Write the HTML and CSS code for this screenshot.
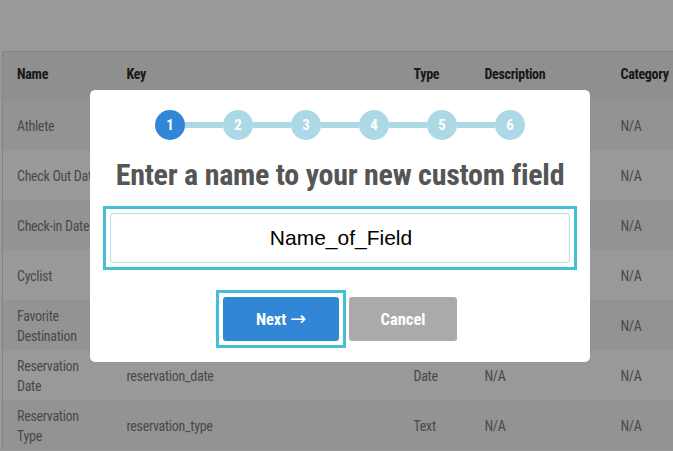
FILE: index.html
```html
<!DOCTYPE html>
<html>
<head>
<meta charset="utf-8">
<link rel="stylesheet" href="styles.css">
</head>
<body>
<div class="page">
  <table class="fields">
    <colgroup>
      <col class="c-name"><col class="c-key"><col class="c-type"><col class="c-desc"><col class="c-cat">
    </colgroup>
    <thead>
      <tr><th>Name</th><th>Key</th><th>Type</th><th>Description</th><th>Category</th></tr>
    </thead>
    <tbody>
      <tr><td>Athlete</td><td>athlete</td><td>Boolean</td><td>N/A</td><td>N/A</td></tr>
      <tr><td>Check Out Date</td><td>check_out_date</td><td>Date</td><td>N/A</td><td>N/A</td></tr>
      <tr><td>Check-in Date</td><td>check_in_date</td><td>Date</td><td>N/A</td><td>N/A</td></tr>
      <tr><td>Cyclist</td><td>cyclist</td><td>Boolean</td><td>N/A</td><td>N/A</td></tr>
      <tr><td>Favorite Destination</td><td>favorite_destination</td><td>Text</td><td>N/A</td><td>N/A</td></tr>
      <tr><td>Reservation Date</td><td>reservation_date</td><td>Date</td><td>N/A</td><td>N/A</td></tr>
      <tr><td>Reservation Type</td><td>reservation_type</td><td>Text</td><td>N/A</td><td>N/A</td></tr>
    </tbody>
  </table>
</div>
<div class="overlay"></div>
<div class="modal">
  <div class="stepper">
    <span class="step active">1</span>
    <span class="bar"></span>
    <span class="step">2</span>
    <span class="bar"></span>
    <span class="step">3</span>
    <span class="bar"></span>
    <span class="step">4</span>
    <span class="bar"></span>
    <span class="step">5</span>
    <span class="bar"></span>
    <span class="step">6</span>
  </div>
  <h1 class="title">Enter a name to your new custom field</h1>
  <div class="field-ring">
    <input class="field" type="text" value="Name_of_Field">
  </div>
  <div class="actions">
    <div class="btn-ring"><button class="btn btn-next">Next <span class="arrow">&rarr;</span></button></div>
    <button class="btn btn-cancel">Cancel</button>
  </div>
</div>
</body>
</html>
```

FILE: styles.css
```css
html, body {
  margin: 0;
  padding: 0;
  width: 673px;
  height: 451px;
  overflow: hidden;
  background: #fff;
  font-family: "Roboto Condensed", Roboto, "Liberation Sans", sans-serif;
  font-stretch: condensed;
}

.page {
  padding: 51px 0 0 2px;
  width: 671px;
  overflow: hidden;
}

.fields {
  border-collapse: collapse;
  width: 720px;
  table-layout: fixed;
  border-top: 1px solid #dcdcdc;
  border-left: 1px solid #dcdcdc;
  font-size: 14px;
}

.c-name { width: 110px; }
.c-key { width: 287px; }
.c-type { width: 71px; }
.c-desc { width: 136px; }
.c-cat { width: 116px; }

.fields th {
  background: #eeeeee;
  color: #2a2a2a;
  font-weight: bold;
  text-align: left;
  height: 48px;
  box-sizing: border-box;
  padding: 0 14px 3px;
  letter-spacing: -0.3px;
}

.fields td {
  color: #7a7a7a;
  height: 50px;
  padding: 2px 14px 0;
  line-height: 20px;
  box-sizing: border-box;
  letter-spacing: -0.3px;
}

.fields tbody tr:nth-child(odd) td { background: #f6f6f6; }
.fields tbody tr:nth-child(even) td { background: #fff; }

.overlay {
  position: fixed;
  inset: 0;
  background: rgba(0, 0, 0, 0.4);
}

.modal {
  position: absolute;
  left: 90px;
  top: 90px;
  width: 500px;
  height: 272px;
  background: #fff;
  border-radius: 5px;
  box-sizing: border-box;
  padding-top: 20px;
  display: flex;
  flex-direction: column;
  align-items: center;
}

.stepper {
  display: flex;
  align-items: center;
  height: 30px;
}

.step {
  width: 30px;
  height: 30px;
  border-radius: 50%;
  background: #add8e6;
  color: #fff;
  font-weight: bold;
  font-size: 15px;
  display: flex;
  align-items: center;
  justify-content: center;
}

.step.active { background: #3186d6; }

.bar {
  width: 38px;
  height: 6px;
  background: #add8e6;
}

.title {
  margin: 17px 0 0;
  font-size: 30px;
  line-height: 36px;
  font-weight: bold;
  color: #555;
  letter-spacing: -0.25px;
}

.field-ring {
  margin-top: 13px;
  width: 474px;
  height: 64px;
  border: 3px solid #45bfd3;
  box-sizing: border-box;
  padding: 4px;
}

.field {
  display: block;
  width: 100%;
  height: 100%;
  box-sizing: border-box;
  border: 1px solid #b7dbe9;
  border-radius: 3px;
  font-family: "Liberation Sans", Arial, sans-serif;
  font-size: 21px;
  color: #000;
  text-align: center;
  outline: none;
  padding: 0 0 0 2px;
}

.actions {
  margin-top: 20px;
  margin-right: 7px;
  display: flex;
  align-items: center;
  gap: 3px;
}

.btn-ring {
  border: 3px solid #45bfd3;
  padding: 4px;
}

.btn {
  display: block;
  height: 44px;
  border: none;
  border-radius: 3px;
  color: #fff;
  font-family: "Roboto Condensed", Roboto, "Liberation Sans", sans-serif;
  font-stretch: condensed;
  font-weight: bold;
  font-size: 16.5px;
  padding: 0;
}

.arrow {
  font-family: "DejaVu Sans", sans-serif;
  font-weight: normal;
  font-stretch: normal;
  font-size: 19px;
  line-height: 1;
}

.btn-next {
  width: 116px;
  background: #3186d6;
}

.btn-cancel {
  width: 108px;
  background: #aaaaaa;
}
```
